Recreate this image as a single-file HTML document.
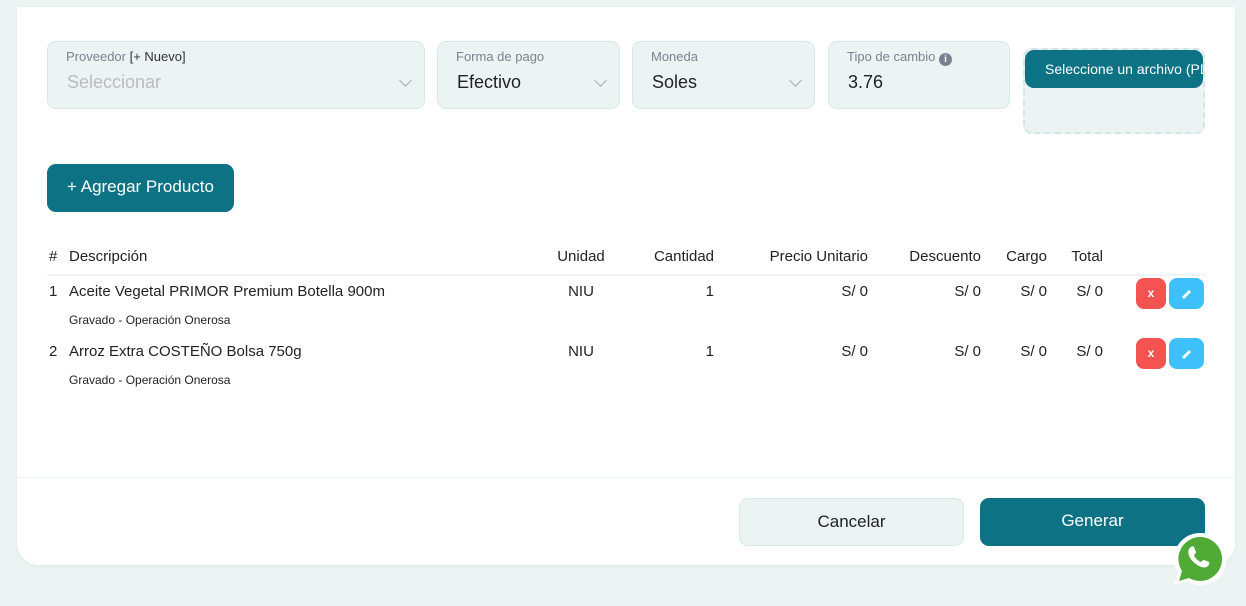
<!DOCTYPE html>
<html><head><meta charset="utf-8"><style>
*{box-sizing:border-box;margin:0;padding:0}
body{width:1246px;height:606px;background:#ecf4f3;font-family:"Liberation Sans",Roboto,sans-serif;position:relative;overflow:hidden;color:#222}
.card{position:absolute;left:17px;top:7px;width:1218px;height:558px;background:#fff;border-radius:0 0 22px 22px;box-shadow:0 2px 6px rgba(0,0,0,.04)}
.a{position:absolute}
.field{position:absolute;top:41px;height:68px;background:#ecf4f3;border:1px solid #d6e8e7;border-radius:9px}
.field .l{position:absolute;left:18px;top:7px;font-size:13px;color:#7b8190}
.field .v{position:absolute;left:19px;top:30px;font-size:18px;color:#222}
.chev{position:absolute;right:14px;top:34px;width:9px;height:9px;border-right:1px solid #aaa;border-bottom:1px solid #aaa;transform:rotate(45deg)}
.t{position:absolute;font-size:15px;color:#222;white-space:nowrap}
.r{text-align:right}
.s{position:absolute;font-size:12px;color:#222}
.bx{position:absolute;width:30px;height:31px;border-radius:8px;background:#f55252;color:#fff;font-size:12px;font-weight:bold;text-align:center;line-height:30px}
.be{position:absolute;width:35px;height:31px;border-radius:8px;background:#3ec0fb}
</style></head><body>
<div class="card"></div>
<div class="field" style="left:47px;width:378px"><div class="l">Proveedor <span style="color:#333">[+ Nuevo]</span></div><div class="v" style="color:#bbb">Seleccionar</div><div class="chev"></div></div>
<div class="field" style="left:437px;width:183px"><div class="l">Forma de pago</div><div class="v">Efectivo</div><div class="chev"></div></div>
<div class="field" style="left:632px;width:183px"><div class="l">Moneda</div><div class="v">Soles</div><div class="chev"></div></div>
<div class="field" style="left:828px;width:182px"><div class="l">Tipo de cambio <span style="display:inline-block;width:13px;height:13px;border-radius:50%;background:#7b8190;color:#fff;font-size:10px;font-weight:bold;text-align:center;line-height:13px;vertical-align:-1px">i</span></div><div class="v">3.76</div></div>
<div class="a" style="left:1023px;top:48px;width:182px;height:86px;background:#ecf4f3;border:2px dashed #d3e6e5;border-radius:9px"></div>
<div class="a" style="left:1025px;top:50px;width:178px;height:38px;background:#0e7285;border-radius:9px;overflow:hidden;color:#fff;font-size:14px;line-height:38px;padding-left:20px;white-space:nowrap">Seleccione un archivo (PDF)</div>
<div class="a" style="left:1203px;top:60px;font-size:14px;color:#fff;opacity:.6">UF</div>
<div class="a" style="left:47px;top:164px;width:187px;height:48px;background:#0e7285;border-radius:9px;color:#fff;font-size:17px;line-height:46px;text-align:center">+ Agregar Producto</div>
<div class="t" style="left:49px;top:248px">#</div>
<div class="t" style="left:69px;top:248px">Descripción</div>
<div class="t" style="left:540px;top:248px;width:82px;text-align:center">Unidad</div>
<div class="t r" style="left:614px;top:248px;width:100px">Cantidad</div>
<div class="t r" style="left:740px;top:248px;width:128px">Precio Unitario</div>
<div class="t r" style="left:880px;top:248px;width:101px">Descuento</div>
<div class="t r" style="left:990px;top:248px;width:57px">Cargo</div>
<div class="t r" style="left:1050px;top:248px;width:53px">Total</div>
<div class="a" style="left:47px;top:274px;width:1158px;height:2px;background:#eef3f3"></div>

<div class="t" style="left:49px;top:283px">1</div>
<div class="t" style="left:69px;top:283px">Aceite Vegetal PRIMOR Premium Botella 900m</div>
<div class="s" style="left:69px;top:313px">Gravado - Operación Onerosa</div>
<div class="t" style="left:540px;top:283px;width:82px;text-align:center">NIU</div>
<div class="t r" style="left:614px;top:283px;width:100px">1</div>
<div class="t r" style="left:740px;top:283px;width:128px">S/ 0</div>
<div class="t r" style="left:880px;top:283px;width:101px">S/ 0</div>
<div class="t r" style="left:990px;top:283px;width:57px">S/ 0</div>
<div class="t r" style="left:1050px;top:283px;width:53px">S/ 0</div>
<div class="bx" style="left:1136px;top:278px">x</div>
<div class="be" style="left:1169px;top:278px"><svg width="35" height="31"><path d="M13 19 L20 12 L22 14 L15 21 Z" fill="#fff"/></svg></div>

<div class="t" style="left:49px;top:343px">2</div>
<div class="t" style="left:69px;top:343px">Arroz Extra COSTEÑO Bolsa 750g</div>
<div class="s" style="left:69px;top:373px">Gravado - Operación Onerosa</div>
<div class="t" style="left:540px;top:343px;width:82px;text-align:center">NIU</div>
<div class="t r" style="left:614px;top:343px;width:100px">1</div>
<div class="t r" style="left:740px;top:343px;width:128px">S/ 0</div>
<div class="t r" style="left:880px;top:343px;width:101px">S/ 0</div>
<div class="t r" style="left:990px;top:343px;width:57px">S/ 0</div>
<div class="t r" style="left:1050px;top:343px;width:53px">S/ 0</div>
<div class="bx" style="left:1136px;top:338px">x</div>
<div class="be" style="left:1169px;top:338px"><svg width="35" height="31"><path d="M13 19 L20 12 L22 14 L15 21 Z" fill="#fff"/></svg></div>

<div class="a" style="left:17px;top:477px;width:1218px;height:1px;background:#eef3f3"></div>
<div class="a" style="left:739px;top:498px;width:225px;height:48px;background:#ecf4f3;border:1px solid #d6e8e7;border-radius:9px;font-size:17px;line-height:46px;text-align:center;color:#222">Cancelar</div>
<div class="a" style="left:980px;top:498px;width:225px;height:48px;background:#0e7285;border-radius:9px;font-size:17px;line-height:46px;text-align:center;color:#fff">Generar</div>
<svg class="a" style="left:1170px;top:530px" width="58" height="56" viewBox="0 0 58 56">
<path d="M29 3a26 26 0 1 1-12 48l-13 4 4-12A26 26 0 0 1 29 3z" fill="#fff"/>
<path d="M29 7a22 22 0 1 1-10 41l-10 3 3-10A22 22 0 0 1 29 7z" fill="#4fab35"/>
<path d="M21 17c1-1 3-1 3 0l2 5c0 1-1 2-2 3 1 3 4 6 7 7 1-1 2-2 3-2l5 2c1 1 0 3-1 4-2 2-5 2-9 0-4-2-8-6-10-10-1-4-1-7 2-9z" fill="#fff"/>
</svg>
</body></html>
